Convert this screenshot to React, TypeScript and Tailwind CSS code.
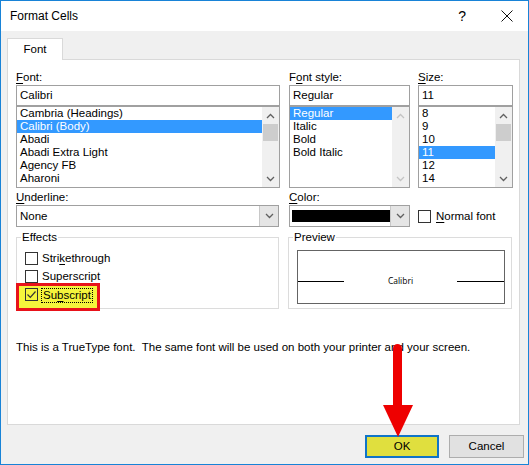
import React from "react";

const fontList = ["Cambria (Headings)", "Calibri (Body)", "Abadi", "Abadi Extra Light", "Agency FB", "Aharoni"];
const styleList = ["Regular", "Italic", "Bold", "Bold Italic"];
const sizeList = ["8", "9", "10", "11", "12", "14"];

function Chevron({ dir, color }: { dir: "up" | "down"; color: string }) {
  return (
    <svg width="9" height="6" viewBox="0 0 9 6">
      <polyline
        points={dir === "up" ? "1,5 4.5,1.5 8,5" : "1,1 4.5,4.5 8,1"}
        fill="none"
        stroke={color}
        strokeWidth="1.3"
      />
    </svg>
  );
}

function ScrollBar({ enabled }: { enabled: boolean }) {
  const c = enabled ? "#606060" : "#c4c4c4";
  return (
    <div className="w-[17px] h-full bg-[#f0f0f0] flex flex-col items-center shrink-0">
      <div className="h-[17px] w-full flex items-center justify-center">
        <Chevron dir="up" color={c} />
      </div>
      {enabled && <div className="w-[15px] h-[17px] bg-[#cdcdcd]" />}
      <div className="flex-1" />
      <div className="h-[17px] w-full flex items-center justify-center">
        <Chevron dir="down" color={c} />
      </div>
    </div>
  );
}

function ListBox({ items, selected, scroll }: { items: string[]; selected: number; scroll: boolean }) {
  return (
    <div className="h-[82px] border border-[#a0a0a0] flex">
      <div className="flex-1 flex flex-col">
        {items.map((item, i) => (
          <div
            key={item}
            className={`h-[13px] leading-[13px] pl-[3px] whitespace-nowrap ${
              i === selected ? "bg-[#3399ff] text-white" : ""
            }`}
          >
            {item}
          </div>
        ))}
      </div>
      <ScrollBar enabled={scroll} />
    </div>
  );
}

function Field({ value }: { value: string }) {
  return <div className="h-[21px] border border-[#a0a0a0] flex items-center pl-[3px]">{value}</div>;
}

function DropButton() {
  return (
    <div className="w-[19px] h-full bg-[#e5e5e5] border-l border-[#c8c8c8] flex items-center justify-center">
      <Chevron dir="down" color="#606060" />
    </div>
  );
}

function Label({ text, key_ }: { text: string; key_: number }) {
  return (
    <div className="h-[15px] leading-[15px]">
      {text.slice(0, key_)}
      <span className="underline underline-offset-2">{text[key_]}</span>
      {text.slice(key_ + 1)}
    </div>
  );
}

function Box({ checked }: { checked?: boolean }) {
  return (
    <div className="w-[13px] h-[13px] border border-[#333333] flex items-center justify-center shrink-0">
      {checked && (
        <svg width="11" height="11" viewBox="0 0 11 11">
          <polyline points="1.5,5.5 4.3,8.3 9.5,2.5" fill="none" stroke="#333333" strokeWidth="1.2" />
        </svg>
      )}
    </div>
  );
}

export default function App() {
  return (
    <div className="w-[529px] h-[465px] relative bg-[#f0f0f0] border border-[#1883d7] flex flex-col font-['Liberation_Sans',sans-serif] text-[11.5px] leading-[15px] text-black overflow-hidden">
      {/* title bar */}
      <div className="h-[30px] bg-white flex items-center pl-[9px] shrink-0 text-[12px]">
        <span>Format Cells</span>
        <span className="ml-auto mr-[35px] text-[14px]">?</span>
        <svg width="12" height="12" viewBox="0 0 12 12" className="mr-[15px]">
          <path d="M0.5 0.5 L11.5 11.5 M11.5 0.5 L0.5 11.5" stroke="#111" strokeWidth="1" />
        </svg>
      </div>

      <div className="pl-[6px] pt-[7px] flex flex-col">
        <div className="w-[56px] h-[22px] bg-white border border-b-0 border-[#d9d9d9] flex items-center justify-center -mb-px relative z-10">
          Font
        </div>
        <div className="w-[513px] h-[366px] bg-white border border-[#d9d9d9] pl-[8px] pt-[10px] flex flex-col">
          <div className="flex">
            <div className="w-[264px] flex flex-col">
              <Label text="Font:" key_={0} />
              <Field value="Calibri" />
              <ListBox items={fontList} selected={1} scroll />
            </div>
            <div className="w-[121px] ml-[9px] flex flex-col">
              <Label text="Font style:" key_={1} />
              <Field value="Regular" />
              <ListBox items={styleList} selected={0} scroll={false} />
            </div>
            <div className="w-[95px] ml-[8px] flex flex-col">
              <Label text="Size:" key_={0} />
              <Field value="11" />
              <ListBox items={sizeList} selected={3} scroll />
            </div>
          </div>

          <div className="flex mt-[2px] items-end">
            <div className="w-[263px] flex flex-col">
              <Label text="Underline:" key_={0} />
              <div className="h-[22px] border border-[#a0a0a0] flex items-center">
                <span className="flex-1 pl-[3px]">None</span>
                <DropButton />
              </div>
            </div>
            <div className="w-[121px] ml-[10px] flex flex-col">
              <Label text="Color:" key_={0} />
              <div className="h-[22px] border border-[#a0a0a0] flex items-center">
                <div className="flex-1 h-full py-[4px] pl-[2px]">
                  <div className="h-full bg-black" />
                </div>
                <DropButton />
              </div>
            </div>
            <div className="ml-[8px] h-[22px] flex items-center gap-[5px]">
              <Box />
              <span>
                <span className="underline underline-offset-2">N</span>ormal font
              </span>
            </div>
          </div>

          <div className="flex mt-[3px] items-start">
            <fieldset className="w-[263px] h-[79px] border border-[#dcdcdc] pt-[4px]">
              <legend className="ml-[4px] px-[1px] leading-[15px]">Effects</legend>
              <div className="h-[18px] flex items-center pl-[8px] gap-[4px]">
                <Box />
                <span>
                  Stri<span className="underline underline-offset-2">k</span>ethrough
                </span>
              </div>
              <div className="h-[18px] flex items-center pl-[8px] gap-[4px]">
                <Box />
                <span>Superscript</span>
              </div>
              <div className="-ml-px -mt-[2px] w-[84px] h-[28px] border-[3px] border-[#e8121a] bg-[#f4f43c] flex items-start pl-[6px] pt-[2px] gap-[3px] relative">
                <Box checked />
                <span className="border border-dotted border-black px-px leading-[13px]">
                  Su<span className="underline underline-offset-2">b</span>script
                </span>
              </div>
            </fieldset>
            <fieldset className="w-[224px] h-[79px] ml-[9px] border border-[#dcdcdc]">
              <legend className="ml-[4px] px-[1px] leading-[15px]">Preview</legend>
              <div className="ml-[8px] mt-[5px] w-[208px] h-[54px] border border-[#646464] pt-[24px]">
                <div className="h-[12px] flex items-center">
                  <div className="w-[46px] h-px bg-black" />
                  <div className="flex-1 text-center text-[8.5px] leading-[12px] font-['Open_Sans',sans-serif]">
                    Calibri
                  </div>
                  <div className="w-[47px] h-px bg-black" />
                </div>
              </div>
            </fieldset>
          </div>

          <div className="mt-[31px]">
            This is a TrueType font.&nbsp; The same font will be used on both your printer and your screen.
          </div>
        </div>

        <div className="flex justify-end mt-[10px] pr-[6px] gap-[10px]">
          <div className="w-[74px] h-[23px] border-2 border-[#0f74c8] bg-[#e0df3e] flex items-center justify-center">
            OK
          </div>
          <div className="w-[75px] h-[23px] border border-[#adadad] bg-[#e1e1e1] flex items-center justify-center -mr-[2px]">
            Cancel
          </div>
        </div>
      </div>

      {/* annotation arrow */}
      <svg width="32" height="96" viewBox="0 0 32 96" className="absolute left-[381px] top-[341px]">
        <rect x="11" y="2" width="9" height="66" rx="4.5" fill="#ee0000" />
        <polygon points="1,63 31,63 16,95" fill="#ee0000" />
      </svg>
    </div>
  );
}
